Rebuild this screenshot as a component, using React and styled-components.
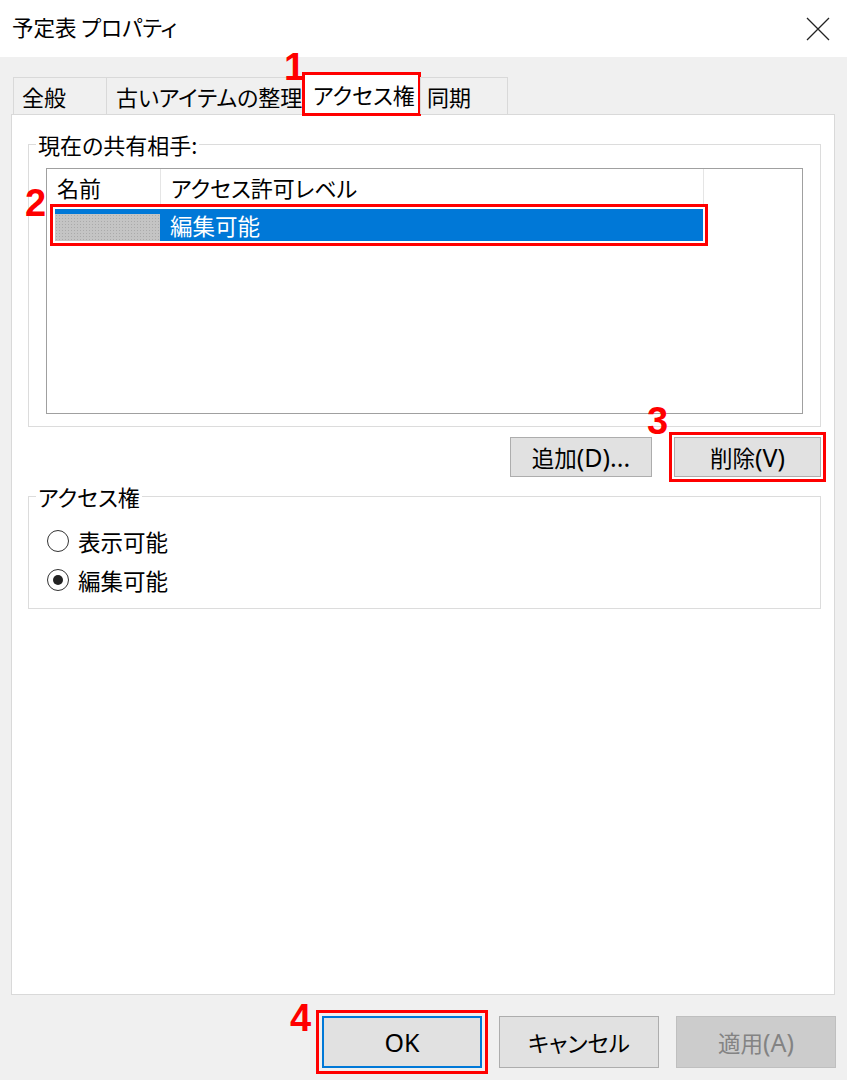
import React from "react";
import styled, { createGlobalStyle } from "styled-components";

const GlobalStyle = createGlobalStyle`
  html, body {
    margin: 0;
    padding: 0;
  }
  body {
    background: #f0f0f0;
    font-family: "Noto Sans CJK JP", "Noto Sans", sans-serif;
    font-feature-settings: "palt";
    color: #000;
  }
`;

const Window = styled.div`
  width: 847px;
  height: 1080px;
  display: flex;
  flex-direction: column;
  background: #f0f0f0;
  overflow: hidden;
`;

const TitleBar = styled.div`
  flex: none;
  height: 57px;
  box-sizing: border-box;
  padding: 0 17px 0 12px;
  background: #fff;
  display: flex;
  align-items: center;
  justify-content: space-between;
`;

const Title = styled.div`
  font-size: 21.5px;
  line-height: 1;
  padding-bottom: 3px;
`;

const Body = styled.div`
  flex: 1;
  display: flex;
  flex-direction: column;
  padding: 20px 12px 0 11px;
`;

const TabStrip = styled.div`
  flex: none;
  height: 37px;
  display: flex;
  align-items: flex-end;
  padding-left: 3px;
  position: relative;
  z-index: 1;
`;

const Tab = styled.div`
  position: relative;
  box-sizing: border-box;
  width: ${(p) => p.$w}px;
  height: ${(p) => (p.$active ? 44 : 37)}px;
  margin-bottom: ${(p) => (p.$active ? -2 : 0)}px;
  margin-left: -1px;
  padding-left: ${(p) => p.$pad || 8}px;
  display: flex;
  align-items: center;
  border: 1px solid #d9d9d9;
  border-bottom: none;
  background: ${(p) => (p.$active ? "#fff" : "#f0f0f0")};
  font-size: 22px;
  line-height: 1.1;
  white-space: nowrap;
  outline: ${(p) => (p.$active ? "3px solid #f00" : "none")};
  outline-offset: -3px;
`;

const Panel = styled.div`
  flex: 1;
  box-sizing: border-box;
  background: #fff;
  border: 1px solid #d9d9d9;
  padding: 14px 13px 0 16px;
  display: flex;
  flex-direction: column;
`;

const Group = styled.fieldset`
  margin: 0;
  padding: 0;
  min-width: 0;
  border: 1px solid #dcdcdc;
  margin-top: ${(p) => p.$top || 0}px;
`;

const Legend = styled.legend`
  margin-left: 7px;
  padding: 0 2px;
  font-size: 22px;
  line-height: 30px;
`;

const ListView = styled.div`
  height: 246px;
  box-sizing: border-box;
  margin: 9px 17px 12px 17px;
  border: 1px solid #a0a0a0;
  background: #fff;
`;

const HeaderRow = styled.div`
  display: flex;
  height: 36px;
`;

const HeaderCell = styled.div`
  width: ${(p) => p.$w}px;
  box-sizing: border-box;
  padding-left: 10px;
  border-right: 1px solid #e5e5e5;
  display: flex;
  align-items: center;
  font-size: 22px;
  white-space: nowrap;
`;

const SelectedRow = styled.div`
  position: relative;
  width: 648px;
  height: 32px;
  margin: 4px 0 0 8px;
  display: flex;
  background: #0078d7;
  outline: 3px solid #f00;
  outline-offset: 2px;
`;

const HiddenName = styled.div`
  width: 105px;
  height: 27px;
  margin-top: 5px;
  background-color: #c4c4c4;
  background-image: radial-gradient(#aaa 0.6px, transparent 0.8px);
  background-size: 3px 3px;
`;

const LevelCell = styled.div`
  padding-left: 10px;
  color: #fff;
  font-size: 22.5px;
  line-height: 32px;
`;

const ButtonRow = styled.div`
  display: flex;
  justify-content: flex-end;
  gap: 22px;
  margin-top: 10px;
`;

const Button = styled.button`
  position: relative;
  width: ${(p) => p.$w}px;
  height: ${(p) => p.$h || 40}px;
  box-sizing: border-box;
  padding: 0;
  font-family: inherit;
  font-feature-settings: "palt";
  font-size: 22.5px;
  color: ${(p) => (p.$disabled ? "#838383" : "#000")};
  background: ${(p) => (p.$disabled ? "#cccccc" : "#e1e1e1")};
  border: ${(p) =>
    p.$primary ? "2px solid #0078d7" : p.$disabled ? "1px solid #bfbfbf" : "1px solid #adadad"};
  outline: ${(p) => (p.$marked ? "3px solid #f00" : "none")};
  outline-offset: ${(p) => p.$offset || 2}px;
`;

const Latin = styled.span`
  font-family: "Noto Sans", "Open Sans", sans-serif;
  font-size: 25px;
`;

const RadioList = styled.div`
  display: flex;
  flex-direction: column;
  padding: 10px 18px 9px;
`;

const RadioRow = styled.label`
  display: flex;
  align-items: center;
  gap: 9px;
  height: 39px;
  font-size: 22.5px;
`;

const RadioDot = styled.span`
  width: 22px;
  height: 22px;
  box-sizing: border-box;
  border-radius: 50%;
  border: 1px solid #333;
  background: #fff;
  display: flex;
  align-items: center;
  justify-content: center;

  &::after {
    content: "";
    width: 10px;
    height: 10px;
    border-radius: 50%;
    background: ${(p) => (p.$checked ? "#222" : "transparent")};
  }
`;

const Footer = styled.div`
  flex: none;
  height: 85px;
  box-sizing: border-box;
  display: flex;
  justify-content: flex-end;
  align-items: flex-start;
  gap: 17px;
  padding: 21px 11px 0 0;
`;

const Badge = styled.span`
  position: absolute;
  left: ${(p) => p.$x}px;
  top: ${(p) => p.$y}px;
  font-family: "Liberation Sans", Arial, sans-serif;
  font-weight: bold;
  font-size: 38px;
  line-height: 26px;
  color: #f00;
  pointer-events: none;
`;

const CloseIcon = () => (
  <svg width="24" height="24" viewBox="0 0 24 24">
    <path d="M1 1 L23 23 M23 1 L1 23" stroke="#222" strokeWidth="1.3" fill="none" />
  </svg>
);

export default function App() {
  return (
    <>
      <GlobalStyle />
      <Window>
        <TitleBar>
          <Title>予定表 プロパティ</Title>
          <CloseIcon />
        </TitleBar>
        <Body>
          <TabStrip>
            <Tab $w={94}>全般</Tab>
            <Tab $w={197} $pad={9}>古いアイテムの整理</Tab>
            <Tab $w={119} $pad={10} $active>
              アクセス権
              <Badge $x={-19} $y={-19}>1</Badge>
            </Tab>
            <Tab $w={88} $pad={6}>同期</Tab>
          </TabStrip>
          <Panel>
            <Group>
              <Legend>現在の共有相手:</Legend>
              <ListView>
                <HeaderRow>
                  <HeaderCell $w={114}>名前</HeaderCell>
                  <HeaderCell $w={543}>アクセス許可レベル</HeaderCell>
                </HeaderRow>
                <SelectedRow>
                  <Badge $x={-30} $y={-19}>2</Badge>
                  <HiddenName />
                  <LevelCell>編集可能</LevelCell>
                </SelectedRow>
              </ListView>
            </Group>
            <ButtonRow>
              <Button $w={142}>
                追加<Latin>(D)...</Latin>
              </Button>
              <Button $w={147} $marked>
                <Badge $x={-28} $y={-30}>3</Badge>
                削除<Latin>(V)</Latin>
              </Button>
            </ButtonRow>
            <Group $top={4}>
              <Legend>アクセス権</Legend>
              <RadioList>
                <RadioRow>
                  <RadioDot />
                  表示可能
                </RadioRow>
                <RadioRow>
                  <RadioDot $checked />
                  編集可能
                </RadioRow>
              </RadioList>
            </Group>
          </Panel>
        </Body>
        <Footer>
          <Button $w={160} $h={52} $primary $marked $offset={3}>
            <Badge $x={-34} $y={-13}>4</Badge>
            <Latin>OK</Latin>
          </Button>
          <Button $w={160} $h={52}>キャンセル</Button>
          <Button $w={160} $h={52} $disabled>
            適用<Latin>(A)</Latin>
          </Button>
        </Footer>
      </Window>
    </>
  );
}
